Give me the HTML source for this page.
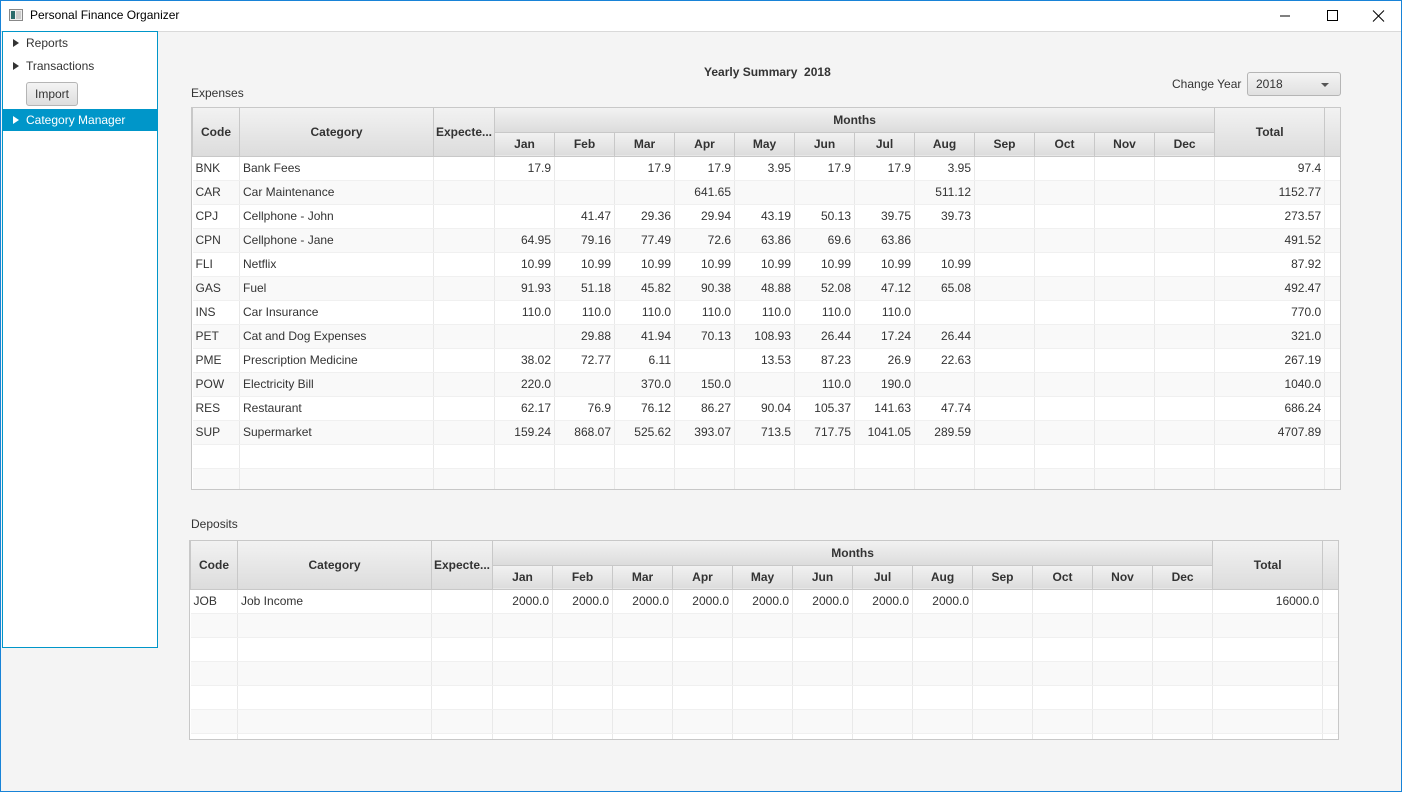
<!DOCTYPE html>
<html><head><meta charset="utf-8">
<style>
*{box-sizing:border-box;margin:0;padding:0}
body{width:1402px;height:792px;overflow:hidden;font-family:"Liberation Sans",sans-serif;font-size:12px;color:#333;background:#f4f4f4;position:relative}
.frame{position:absolute;left:0;top:0;width:1402px;height:792px;border:1px solid #1883d7;pointer-events:none;z-index:10}
.title{position:absolute;left:0;top:0;width:1402px;height:32px;background:#fff;border-bottom:1px solid #d9d9d9}
.title span{position:absolute;left:30px;top:8px;font-size:12px;color:#000}
.side{position:absolute;left:2px;top:31px;width:156px;height:617px;background:#fff;border:1px solid #0096c9}
.item{position:absolute;left:0;width:154px;height:22px;font-size:12px;color:#333}
.item .t{position:absolute;left:23px;top:4px}
.tri{position:absolute;left:10px;top:7px;width:0;height:0;border-top:4px solid transparent;border-bottom:4px solid transparent;border-left:6px solid #333}
.sel{background:#0096c9;color:#fff}
.sel .tri{border-left-color:#fff}
.btn{position:absolute;left:23px;top:50px;width:52px;height:24px;border:1px solid #b5b5b5;border-radius:3px;background:linear-gradient(#f4f4f4,#dedede);text-align:center;line-height:22px;font-size:12px}
.lbl{position:absolute;font-size:12px;color:#333}
.combo{position:absolute;left:1247px;top:72px;width:94px;height:24px;border:1px solid #b5b5b5;border-radius:3px;background:linear-gradient(#f4f4f4,#e0e0e0)}
.combo span{position:absolute;left:8px;top:4px}
.combo i{position:absolute;right:11px;top:10px;border-left:4px solid transparent;border-right:4px solid transparent;border-top:4px solid #555}
.tw{position:absolute;border:1px solid #c8c8c8;background:#fff;overflow:hidden}
table{border-collapse:collapse;table-layout:fixed}
th{font-weight:bold;background:linear-gradient(#f2f2f2,#dcdcdc);border:1px solid #c8c8c8;border-top:none;height:24px;font-size:12px;color:#333;padding:0;overflow:hidden;white-space:nowrap}
td{height:24px;border-right:1px solid #e9e9e9;border-bottom:1px solid #f0f0f0;padding:0 3px;white-space:nowrap;overflow:hidden}
td.n{text-align:right}
tr.o td{background:#f9f9f9}
</style></head><body>
<div class="title">
<svg style="position:absolute;left:9px;top:9px" width="14" height="12"><rect x="0.5" y="0.5" width="13" height="11" fill="#eee" stroke="#888"/><rect x="2" y="2" width="4" height="8" fill="#2a6b6b"/><rect x="7" y="2" width="5" height="8" fill="#ccc"/></svg>
<span>Personal Finance Organizer</span>
<svg style="position:absolute;left:1280px;top:10px" width="110" height="12"><line x1="0" y1="6" x2="10" y2="6" stroke="#000"/><rect x="47.5" y="0.5" width="10" height="10" fill="none" stroke="#000"/><path d="M93 0.5L104 11.5M104 0.5L93 11.5" stroke="#000"/></svg>
</div>
<div class="side">
<div class="item" style="top:0"><div class="tri"></div><span class="t">Reports</span></div>
<div class="item" style="top:23px"><div class="tri"></div><span class="t">Transactions</span></div>
<div class="btn">Import</div>
<div class="item sel" style="top:77px"><div class="tri"></div><span class="t">Category Manager</span></div>
</div>
<div class="lbl" style="left:704px;top:65px;font-weight:bold">Yearly Summary&nbsp;&nbsp;2018</div>
<div class="lbl" style="left:191px;top:86px">Expenses</div>
<div class="lbl" style="left:1172px;top:77px">Change Year</div>
<div class="combo"><span>2018</span><i></i></div>

<div class="tw" style="left:191px;top:107px;width:1150px;height:383px">
<table style="width:1148px">
<colgroup><col style="width:47px"><col style="width:194px"><col style="width:61px"><col span="12" style="width:60px"><col style="width:110px"><col style="width:16px"></colgroup>
<tr><th rowspan="2" style="height:48px">Code</th><th rowspan="2">Category</th><th rowspan="2">Expecte...</th><th colspan="12">Months</th><th rowspan="2">Total</th><th rowspan="2"></th></tr>
<tr><th>Jan</th><th>Feb</th><th>Mar</th><th>Apr</th><th>May</th><th>Jun</th><th>Jul</th><th>Aug</th><th>Sep</th><th>Oct</th><th>Nov</th><th>Dec</th></tr>
<tr><td>BNK</td><td>Bank Fees</td><td></td><td class="n">17.9</td><td></td><td class="n">17.9</td><td class="n">17.9</td><td class="n">3.95</td><td class="n">17.9</td><td class="n">17.9</td><td class="n">3.95</td><td></td><td></td><td></td><td></td><td class="n">97.4</td><td></td></tr>
<tr class="o"><td>CAR</td><td>Car Maintenance</td><td></td><td></td><td></td><td></td><td class="n">641.65</td><td></td><td></td><td></td><td class="n">511.12</td><td></td><td></td><td></td><td></td><td class="n">1152.77</td><td></td></tr>
<tr><td>CPJ</td><td>Cellphone - John</td><td></td><td></td><td class="n">41.47</td><td class="n">29.36</td><td class="n">29.94</td><td class="n">43.19</td><td class="n">50.13</td><td class="n">39.75</td><td class="n">39.73</td><td></td><td></td><td></td><td></td><td class="n">273.57</td><td></td></tr>
<tr class="o"><td>CPN</td><td>Cellphone - Jane</td><td></td><td class="n">64.95</td><td class="n">79.16</td><td class="n">77.49</td><td class="n">72.6</td><td class="n">63.86</td><td class="n">69.6</td><td class="n">63.86</td><td></td><td></td><td></td><td></td><td></td><td class="n">491.52</td><td></td></tr>
<tr><td>FLI</td><td>Netflix</td><td></td><td class="n">10.99</td><td class="n">10.99</td><td class="n">10.99</td><td class="n">10.99</td><td class="n">10.99</td><td class="n">10.99</td><td class="n">10.99</td><td class="n">10.99</td><td></td><td></td><td></td><td></td><td class="n">87.92</td><td></td></tr>
<tr class="o"><td>GAS</td><td>Fuel</td><td></td><td class="n">91.93</td><td class="n">51.18</td><td class="n">45.82</td><td class="n">90.38</td><td class="n">48.88</td><td class="n">52.08</td><td class="n">47.12</td><td class="n">65.08</td><td></td><td></td><td></td><td></td><td class="n">492.47</td><td></td></tr>
<tr><td>INS</td><td>Car Insurance</td><td></td><td class="n">110.0</td><td class="n">110.0</td><td class="n">110.0</td><td class="n">110.0</td><td class="n">110.0</td><td class="n">110.0</td><td class="n">110.0</td><td></td><td></td><td></td><td></td><td></td><td class="n">770.0</td><td></td></tr>
<tr class="o"><td>PET</td><td>Cat and Dog Expenses</td><td></td><td></td><td class="n">29.88</td><td class="n">41.94</td><td class="n">70.13</td><td class="n">108.93</td><td class="n">26.44</td><td class="n">17.24</td><td class="n">26.44</td><td></td><td></td><td></td><td></td><td class="n">321.0</td><td></td></tr>
<tr><td>PME</td><td>Prescription Medicine</td><td></td><td class="n">38.02</td><td class="n">72.77</td><td class="n">6.11</td><td></td><td class="n">13.53</td><td class="n">87.23</td><td class="n">26.9</td><td class="n">22.63</td><td></td><td></td><td></td><td></td><td class="n">267.19</td><td></td></tr>
<tr class="o"><td>POW</td><td>Electricity Bill</td><td></td><td class="n">220.0</td><td></td><td class="n">370.0</td><td class="n">150.0</td><td></td><td class="n">110.0</td><td class="n">190.0</td><td></td><td></td><td></td><td></td><td></td><td class="n">1040.0</td><td></td></tr>
<tr><td>RES</td><td>Restaurant</td><td></td><td class="n">62.17</td><td class="n">76.9</td><td class="n">76.12</td><td class="n">86.27</td><td class="n">90.04</td><td class="n">105.37</td><td class="n">141.63</td><td class="n">47.74</td><td></td><td></td><td></td><td></td><td class="n">686.24</td><td></td></tr>
<tr class="o"><td>SUP</td><td>Supermarket</td><td></td><td class="n">159.24</td><td class="n">868.07</td><td class="n">525.62</td><td class="n">393.07</td><td class="n">713.5</td><td class="n">717.75</td><td class="n">1041.05</td><td class="n">289.59</td><td></td><td></td><td></td><td></td><td class="n">4707.89</td><td></td></tr>
<tr><td></td><td></td><td></td><td></td><td></td><td></td><td></td><td></td><td></td><td></td><td></td><td></td><td></td><td></td><td></td><td></td><td></td></tr>
<tr class="o"><td></td><td></td><td></td><td></td><td></td><td></td><td></td><td></td><td></td><td></td><td></td><td></td><td></td><td></td><td></td><td></td><td></td></tr>
</table></div>

<div class="lbl" style="left:191px;top:517px">Deposits</div>
<div class="tw" style="left:189px;top:540px;width:1150px;height:200px">
<table style="width:1148px">
<colgroup><col style="width:47px"><col style="width:194px"><col style="width:61px"><col span="12" style="width:60px"><col style="width:110px"><col style="width:16px"></colgroup>
<tr><th rowspan="2" style="height:48px">Code</th><th rowspan="2">Category</th><th rowspan="2">Expecte...</th><th colspan="12">Months</th><th rowspan="2">Total</th><th rowspan="2"></th></tr>
<tr><th>Jan</th><th>Feb</th><th>Mar</th><th>Apr</th><th>May</th><th>Jun</th><th>Jul</th><th>Aug</th><th>Sep</th><th>Oct</th><th>Nov</th><th>Dec</th></tr>
<tr><td>JOB</td><td>Job Income</td><td></td><td class="n">2000.0</td><td class="n">2000.0</td><td class="n">2000.0</td><td class="n">2000.0</td><td class="n">2000.0</td><td class="n">2000.0</td><td class="n">2000.0</td><td class="n">2000.0</td><td></td><td></td><td></td><td></td><td class="n">16000.0</td><td></td></tr>
<tr class="o"><td></td><td></td><td></td><td></td><td></td><td></td><td></td><td></td><td></td><td></td><td></td><td></td><td></td><td></td><td></td><td></td><td></td></tr>
<tr><td></td><td></td><td></td><td></td><td></td><td></td><td></td><td></td><td></td><td></td><td></td><td></td><td></td><td></td><td></td><td></td><td></td></tr>
<tr class="o"><td></td><td></td><td></td><td></td><td></td><td></td><td></td><td></td><td></td><td></td><td></td><td></td><td></td><td></td><td></td><td></td><td></td></tr>
<tr><td></td><td></td><td></td><td></td><td></td><td></td><td></td><td></td><td></td><td></td><td></td><td></td><td></td><td></td><td></td><td></td><td></td></tr>
<tr class="o"><td></td><td></td><td></td><td></td><td></td><td></td><td></td><td></td><td></td><td></td><td></td><td></td><td></td><td></td><td></td><td></td><td></td></tr>
<tr><td></td><td></td><td></td><td></td><td></td><td></td><td></td><td></td><td></td><td></td><td></td><td></td><td></td><td></td><td></td><td></td><td></td></tr>
</table></div>
<div class="frame"></div>
</body></html>
